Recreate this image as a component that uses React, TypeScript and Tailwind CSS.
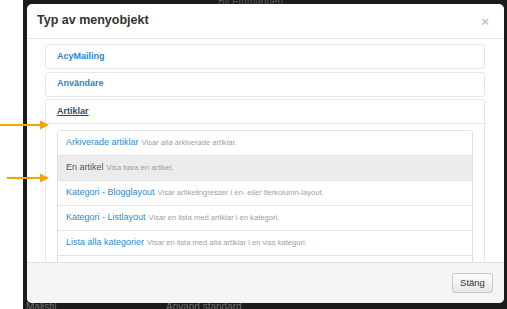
import React from 'react'

const ROWS = [
  { title: 'Arkiverade artiklar', desc: 'Visar alla arkiverade artiklar.' },
  { title: 'En artikel', desc: 'Visa bara en artikel.', active: true },
  { title: 'Kategori - Blogglayout', desc: 'Visar artikelingresser i en- eller flerkolumn-layout.' },
  { title: 'Kategori - Listlayout', desc: 'Visar en lista med artiklar i en kategori.' },
  { title: 'Lista alla kategorier', desc: 'Visar en lista med alla artiklar i en viss kategori.' },
  { title: 'Utvalda artiklar', desc: 'Visar alla utvalda artiklar.' },
]

function Arrow({ from, className }: { from: number; className: string }) {
  return (
    <svg className={className} width={50} height={10} viewBox="0 0 50 10">
      <line x1={from} y1={5} x2={42} y2={5} stroke="#f5a300" strokeWidth={2} />
      <polygon points="40,0.5 49,5 40,9.5" fill="#f5a300" />
    </svg>
  )
}

export default function App() {
  return (
    <div className="relative w-[507px] h-[309px] overflow-hidden bg-white font-['Liberation_Sans',Arial,sans-serif]">
      {/* backdrop */}
      <div className="ml-[23px] h-full bg-[#1c1c1c] pt-[4px] pl-[4px] pr-[3px] relative">
        <div className="absolute top-[-6px] left-[195px] text-[10px] text-[#5a5a5a]">Bli Emmannen ...</div>
        <div className="absolute bottom-[-5px] left-[3px] text-[10px] text-[#6e6e6e]">Mallstil</div>
        <div className="absolute bottom-[-5px] left-[143px] text-[10px] text-[#6e6e6e]">Använd standard</div>

        {/* modal */}
        <div className="relative h-[299px] bg-white rounded-[5px] overflow-hidden flex flex-col">
          <div className="h-[35px] shrink-0 border-b border-[#e5e5e5] flex items-center justify-between pl-[10px] pr-[15px]">
            <span className="text-[12.5px] font-bold text-[#333] pb-[1px]">Typ av menyobjekt</span>
            <span className="text-[13px] font-bold text-[#c4c4c4] leading-none">×</span>
          </div>

          <div className="h-[223px] overflow-hidden pt-[5px] pl-[18px] pr-[19px] flex flex-col gap-[2.5px]">
            <div className="h-[25px] shrink-0 border border-[#e6e6e6] rounded-[3px] flex items-center pl-[11px]">
              <span className="text-[9px] font-bold text-[#1f87d2]">AcyMailing</span>
            </div>
            <div className="h-[25px] shrink-0 border border-[#e6e6e6] rounded-[3px] flex items-center pl-[11px]">
              <span className="text-[9px] font-bold text-[#1f87d2]">Användare</span>
            </div>
            <div className="shrink-0 border border-[#e6e6e6] rounded-[3px]">
              <div className="h-[24px] border-b border-[#e6e6e6] flex items-center pl-[11px]">
                <span className="text-[9px] font-bold text-[#2b4a6c] underline">Artiklar</span>
              </div>
              <div className="pt-[6px] px-[11px]">
                <div className="border border-[#e0e0e0] rounded-[3px]">
                  {ROWS.map((r) => (
                    <div
                      key={r.title}
                      className={
                        'h-[25px] border-b border-[#e4e4e4] flex items-center pl-[8px] whitespace-nowrap ' +
                        (r.active ? 'bg-[#ececec]' : 'bg-white')
                      }
                    >
                      <span className={'text-[9px] ' + (r.active ? 'text-[#555]' : 'text-[#2a8ad4]')}>{r.title}</span>
                      <span className="text-[7.6px] text-[#a0a0a0] ml-[3px]">{r.desc}</span>
                    </div>
                  ))}
                </div>
              </div>
            </div>
          </div>

          <div className="flex-1 bg-[#f5f5f5] border-t border-[#e2e2e2] flex items-center justify-end pr-[11px]">
            <button className="w-[41px] h-[20px] rounded-[3px] border border-[#c8c8c8] bg-gradient-to-b from-white to-[#e6e6e6] text-[9.5px] text-[#333] flex items-center justify-center">
              Stäng
            </button>
          </div>
        </div>
      </div>

      {/* annotation arrows */}
      <Arrow from={0} className="absolute left-0 top-[120px]" />
      <Arrow from={7} className="absolute left-0 top-[173px]" />
    </div>
  )
}
